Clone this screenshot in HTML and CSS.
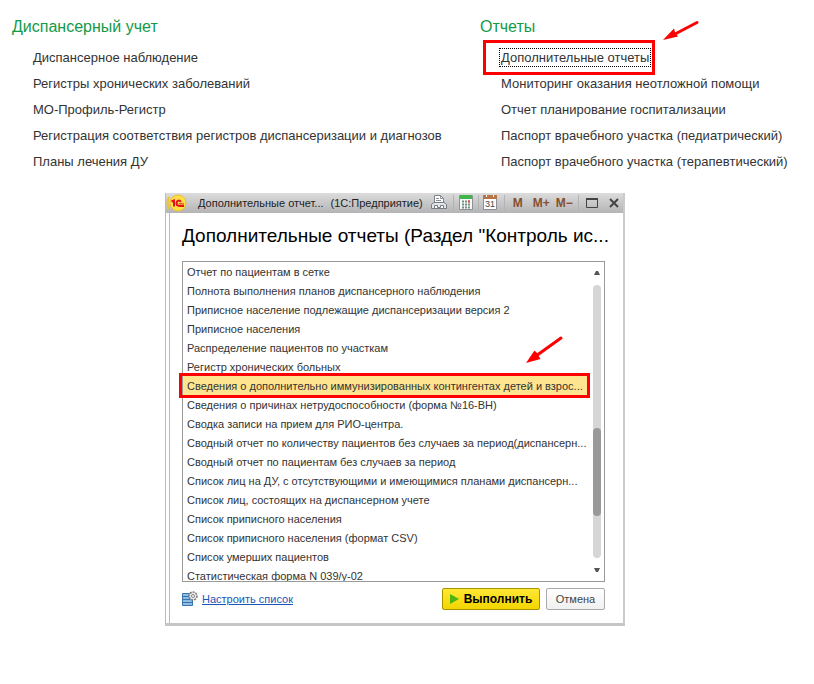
FILE: index.html
```html
<!DOCTYPE html>
<html lang="ru">
<head>
  <meta charset="UTF-8" />
  <meta name="viewport" content="width=device-width, initial-scale=1.0"/>
  <title>Дополнительные отчеты</title>
  <link rel="stylesheet" href="styles.css">
</head>
<body>
<!-- SECTIONS MENU -->
<nav class="menu">
  <section class="menu-group">
    <h2>Диспансерный учет</h2>
    <ul>
      <li><a href="#">Диспансерное наблюдение</a></li>
      <li><a href="#">Регистры хронических заболеваний</a></li>
      <li><a href="#">МО-Профиль-Регистр</a></li>
      <li><a href="#">Регистрация соответствия регистров диспансеризации и диагнозов</a></li>
      <li><a href="#">Планы лечения ДУ</a></li>
    </ul>
  </section>
  <section class="menu-group">
    <h2>Отчеты</h2>
    <ul>
      <li class="marked">
        <a class="focused" href="#">Дополнительные отчеты</a>
        <svg class="arrow arrow-menu" width="38" height="22" viewBox="0 0 38 22"><path d="M35 2.5L14 13.5" stroke="#f00" stroke-width="3" stroke-linecap="round"/><path d="M1 20L12 8.500L13 12L16 16.500Z" fill="#f00"/></svg>
      </li>
      <li><a href="#">Мониторинг оказания неотложной помощи</a></li>
      <li><a href="#">Отчет планирование госпитализации</a></li>
      <li><a href="#">Паспорт врачебного участка (педиатрический)</a></li>
      <li><a href="#">Паспорт врачебного участка (терапевтический)</a></li>
    </ul>
  </section>
</nav>

<!-- REPORTS WINDOW -->
<main class="window">
  <header class="titlebar">
    <svg class="logo" width="24" height="18" viewBox="0 0 24 18">
      <path d="M3 3Q0 9 3 15" fill="none" stroke="#f4c12c" stroke-width="2"/>
      <circle cx="12" cy="9" r="8" fill="#fde047" stroke="#efbf2a"/>
      <path d="M5.500 7.500L8 6.500V12.500" fill="none" stroke="#e0141c" stroke-width="2"/>
      <path d="M15 8Q13.500 5.800 11.500 7Q9.800 8.700 11 11Q12 12.200 18 12" fill="none" stroke="#e0141c" stroke-width="2"/>
      <path d="M14 9.500H13.500Q13.500 10 18 10" fill="none" stroke="#e0141c"/>
    </svg>
    <span class="caption">Дополнительные отчет...</span>
    <span class="app">(1С:Предприятие)</span>
    <button class="tool print" aria-label="Печать">
      <svg width="16" height="15" viewBox="0 0 16 15"><path d="M3.500 7V.5H9.500L12.500 3.500V7" fill="#fff" stroke="#7e8289"/><path d="M9.500.5V3.500H12.500M5 3.500H8M5 5.500H10" fill="none" stroke="#8e9299"/><path d="M3 7.500H13L15.500 9.500V13.500H.5V9.500Z" fill="#e4e7ea" stroke="#777b82"/><path d="M3.500 10.500H6.500V12.500H9.500V10.500H12.500V13.500H3.500Z" fill="#fff" stroke="#777b82"/></svg>
    </button>
    <span class="sep"></span>
    <button class="tool calc" aria-label="Калькулятор">
      <svg width="14" height="15" viewBox="0 0 14 15"><path d="M.5.5H13.500V14.500H.5Z" fill="#f7f7f7" stroke="#8c9297"/><path d="M1 0H13V4H1Z" fill="#3fb64a"/><path d="M3 6.500H11M3 9.500H11M3 12.500H11" stroke="#6c8f80" stroke-width="2" stroke-dasharray="2 1"/><path d="M9 6.500H11" stroke="#e04848" stroke-width="2"/></svg>
    </button>
    <span class="sep"></span>
    <button class="tool calendar" aria-label="Календарь">
      <svg width="14" height="15" viewBox="0 0 14 15"><path d="M.5.5H13.500V14.500H.5Z" fill="#fff" stroke="#8d8f96"/><path d="M0 0H14V4H0Z" fill="#b97445"/><path d="M3.500 0V2M10.500 0V2" stroke="#fff"/><text x="7" y="12" text-anchor="middle">31</text></svg>
    </button>
    <span class="sep"></span>
    <button class="tool mem m">M</button>
    <button class="tool mem m-plus">M+</button>
    <button class="tool mem m-minus">M−</button>
    <span class="sep"></span>
    <button class="tool maximize" aria-label="Развернуть">
      <svg width="12" height="10" viewBox="0 0 12 10"><path d="M.5 1H11.500V9.500H.5Z" fill="none" stroke="#444"/><path d="M0 1H12" stroke="#444" stroke-width="2"/></svg>
    </button>
    <button class="tool close" aria-label="Закрыть">
      <svg width="10" height="10" viewBox="0 0 10 10"><path d="M1 1L9 9M9 1L1 9" stroke="#444" stroke-width="2"/></svg>
    </button>
  </header>

  <div class="content">
    <h1>Дополнительные отчеты (Раздел "Контроль ис...</h1>
    <div class="list">
      <ul class="reports">
        <li>Отчет по пациентам в сетке</li>
        <li>Полнота выполнения планов диспансерного наблюдения</li>
        <li>Приписное население подлежащие диспансеризации версия 2</li>
        <li>Приписное населения</li>
        <li>Распределение пациентов по участкам</li>
        <li>Регистр хронических больных</li>
        <li class="selected">Сведения о дополнительно иммунизированных контингентах детей и взрос...</li>
        <li>Сведения о причинах нетрудоспособности (форма №16-ВН)</li>
        <li>Сводка записи на прием для РИО-центра.</li>
        <li>Сводный отчет по количеству пациентов без случаев за период(диспансерн...</li>
        <li>Сводный отчет по пациентам без случаев за период</li>
        <li>Список лиц на ДУ, с отсутствующими и имеющимися планами диспансерн...</li>
        <li>Список лиц, состоящих на диспансерном учете</li>
        <li>Список приписного населения</li>
        <li>Список приписного населения (формат CSV)</li>
        <li>Список умерших пациентов</li>
        <li>Статистическая форма N 039/у-02</li>
      </ul>
      <div class="scrollbar">
        <svg width="6" height="4" viewBox="0 0 6 4"><path d="M2 0H4L6 4H0Z" fill="#555"/></svg>
        <div class="track"><div class="thumb"></div></div>
        <svg width="6" height="4" viewBox="0 0 6 4"><path d="M0 0H6L4 4H2Z" fill="#555"/></svg>
      </div>
      <svg class="arrow arrow-list" width="40" height="30" viewBox="0 0 40 30"><path d="M36 3L13 19.500" stroke="#f00" stroke-width="3" stroke-linecap="round"/><path d="M1 28L9.500 15.500L12 18L15.500 24Z" fill="#f00"/></svg>
    </div>
    <footer class="actions">
      <svg width="16" height="16" viewBox="0 0 16 16"><path d="M.5 2.500H10.500V14.500H.5Z" fill="#8dbde6" stroke="#3973a8"/><path d="M1 5.500H10M1 8.500H10M1 11.500H10" stroke="#3973a8"/><circle cx="11" cy="5" r="4" fill="#e8e8e8" stroke="#777" stroke-width="1.500" stroke-dasharray="2 1"/><circle cx="11" cy="5" r="1.500" fill="#fff" stroke="#888"/></svg>
      <a class="setup" href="#">Настроить список</a>
      <button class="btn run"><svg width="9" height="10" viewBox="0 0 9 10"><path d="M0 0L9 5L0 10Z" fill="#4cb50e"/></svg>Выполнить</button>
      <button class="btn cancel">Отмена</button>
    </footer>
  </div>
</main>
</body>
</html>
```
FILE: styles.css
```css
*, *::before, *::after { box-sizing: border-box; }
body {
  margin: 0;
  background: #fff;
  color: #333;
  font-family: "Liberation Sans", Arial, sans-serif;
  font-size: 13px;
}
ul {
  list-style: none;
  margin: 0;
  padding: 0;
}
svg { flex: none; }
button {
  font-family: inherit;
  cursor: pointer;
}

/* menu */
.menu {
  display: grid;
  grid-template-columns: 468px 1fr;
  padding: 17px 12px 0;
}
.menu h2 {
  margin: 0 0 8px;
  color: #139a48;
  font-size: 16px;
  font-weight: normal;
  line-height: 20px;
}
.menu ul { padding-left: 21px; }
.menu li {
  line-height: 26px;
  white-space: nowrap;
}
.menu a {
  color: #333;
  text-decoration: none;
}
.marked { position: relative; }
.marked::before {
  content: "";
  position: absolute;
  left: -18px;
  top: -5px;
  width: 172px;
  height: 35px;
  border: 3px solid #f00;
}
.menu .focused {
  outline: 1px dotted #000;
  outline-offset: 1px;
}
.arrow {
  position: absolute;
  fill: none;
}
.arrow-menu {
  left: 161px;
  top: -25px;
}

/* window */
.window {
  max-width: 460px;
  margin: 18px 0 0 165px;
  border: 1px solid #bbb;
  border-width: 0 2px 3px 1px;
  border-color: #bbb #c9cacb #c4c6c8 #bbb;
  background: #fff;
}
.titlebar {
  display: flex;
  align-items: center;
  height: 20px;
  padding-bottom: 1px;
  background: linear-gradient(#dcdcdc, #b4b4b6);
  color: #222;
  font-size: 11px;
  white-space: nowrap;
}
.caption { margin-left: 8px; }
.app { margin-left: 7px; }
.tool {
  display: flex;
  align-items: center;
  padding: 0;
  border: 0;
  background: none;
}
.sep {
  width: 1px;
  height: 16px;
  background: #b4b4b4;
}
.print { margin: 0 6px 0 8px; }
.calc { margin: 0 5px; }
.calendar { margin: 0 7px 0 4px; }
.calendar text {
  fill: #444;
  font-size: 9px;
}
.mem {
  color: #85502d;
  font-size: 12px;
  font-weight: bold;
}
.m { margin-left: 8px; }
.m-plus { margin: 0 6px 0 10px; }
.m-minus { margin-right: 5px; }
.maximize { margin-left: 7px; }
.close { margin: 0 4px 0 auto; }
.content {
  margin-left: 3px;
  padding: 12px 18px 13px 12px;
  border-left: 1px solid #bbb;
}
h1 {
  margin: 0 0 14px;
  color: #000;
  font-size: 19px;
  font-weight: normal;
  line-height: 22px;
  white-space: nowrap;
}
.list {
  position: relative;
  display: flex;
  height: 321px;
  border: 1px solid #999;
}
.reports {
  flex: 1;
  min-width: 0;
  overflow-x: visible;
  overflow-y: clip;
  font-size: 11px;
}
.reports li {
  height: 19px;
  padding-left: 4px;
  line-height: 20px;
  white-space: nowrap;
}
.reports .selected {
  position: relative;
  background: #ffe48f;
}
.selected::after {
  content: "";
  position: absolute;
  inset: -3px 0 -3px -4px;
  border: 3px solid #f00;
}
.scrollbar {
  display: flex;
  flex-direction: column;
  align-items: center;
  gap: 10px;
  width: 14px;
  padding: 9px 0;
}
.track {
  flex: 1;
  width: 8px;
  padding-top: 143px;
  border-radius: 4px;
  background: #d6d6d6;
}
.thumb {
  height: 88px;
  border-radius: 4px;
  background: #999;
}
.arrow-list {
  left: 342px;
  top: 73px;
}
.actions {
  display: flex;
  align-items: center;
  padding-top: 6px;
}
.setup {
  margin: 0 auto 0 4px;
  color: #1a56b8;
  font-size: 11px;
}
.btn {
  display: flex;
  align-items: center;
  justify-content: center;
  height: 22px;
  border-radius: 2px;
  font-size: 11px;
}
.run {
  gap: 5px;
  width: 98px;
  border: 1px solid #a89200;
  background: linear-gradient(#ffe835, #f3d500);
  color: #000;
  font-size: 12px;
  font-weight: bold;
}
.cancel {
  width: 59px;
  margin-left: 6px;
  border: 1px solid #aaa;
  background: linear-gradient(#fff, #f0f0f0);
  color: #444;
}
```
